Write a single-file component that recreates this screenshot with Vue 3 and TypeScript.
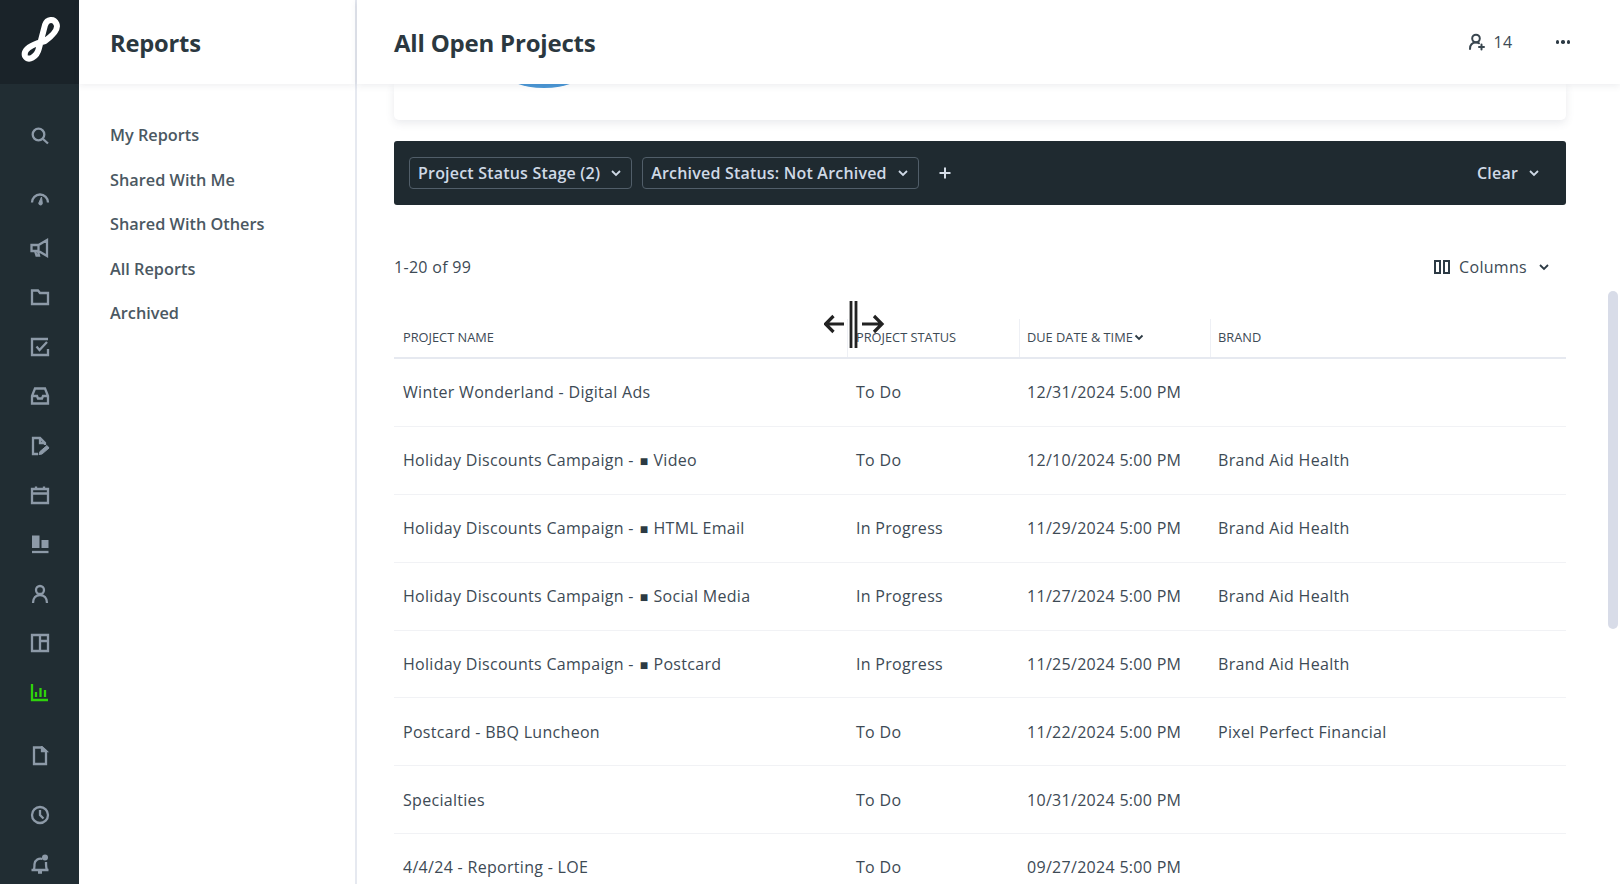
<script setup lang="ts">
interface Row { name: string; tag?: string; status: string; due: string; brand: string; }
const H = 'Holiday Discounts Campaign -';
const rows: Row[] = [
  { name: 'Winter Wonderland - Digital Ads', status: 'To Do', due: '12/31/2024 5:00 PM', brand: '' },
  { name: H, tag: 'Video', status: 'To Do', due: '12/10/2024 5:00 PM', brand: 'Brand Aid Health' },
  { name: H, tag: 'HTML Email', status: 'In Progress', due: '11/29/2024 5:00 PM', brand: 'Brand Aid Health' },
  { name: H, tag: 'Social Media', status: 'In Progress', due: '11/27/2024 5:00 PM', brand: 'Brand Aid Health' },
  { name: H, tag: 'Postcard', status: 'In Progress', due: '11/25/2024 5:00 PM', brand: 'Brand Aid Health' },
  { name: 'Postcard - BBQ Luncheon', status: 'To Do', due: '11/22/2024 5:00 PM', brand: 'Pixel Perfect Financial' },
  { name: 'Specialties', status: 'To Do', due: '10/31/2024 5:00 PM', brand: '' },
  { name: '4/4/24 - Reporting - LOE', status: 'To Do', due: '09/27/2024 5:00 PM', brand: '' },
];
const links = ['My Reports', 'Shared With Me', 'Shared With Others', 'All Reports', 'Archived'];
</script>

<template>
  <div class="app">
    <aside class="rail">
      <div class="logo">
        <svg width="44" height="54" viewBox="-2 -1 44 54" fill="none" stroke="#fff" stroke-width="6" stroke-linecap="round">
          <path d="M25 25 C32 20 39 14 36.500 8 C34 2 27 3 25 9 L19 32 C17 41 8 46 5 40 C3 34 10 30 18 27 L25 25" />
        </svg>
      </div>
      <nav class="rail-icons">
        <svg class="ic s1" viewBox="0 0 20 20"><circle cx="8.500" cy="8.500" r="5.800"/><path d="M13 13l5 4.500"/></svg>
        <svg class="ic s2" viewBox="0 0 20 20"><path d="M2 14.500a8 8 0 0 1 16 0"/><path d="M8.800 15l2.700-6 .8 6.500a1.700 1.700 0 0 1-3.500-.5z" fill="#8d9aa8" stroke-width="1"/></svg>
        <svg class="ic s3" viewBox="0 0 20 20"><path d="M1.500 7h7l8.500-5v16l-8.500-5h-7zM5 13l1.500 4.500h2.500l-1-4M8.500 7v6"/></svg>
        <svg class="ic s3" viewBox="0 0 20 20"><path d="M2 3.500h6l2 2.500h8v11H2z"/></svg>
        <svg class="ic s3" viewBox="0 0 20 20"><path d="M18 2H2v16h16v-6"/><path d="M6.500 9.500l3 3.500L17 5"/></svg>
        <svg class="ic s3" viewBox="0 0 20 20"><path d="M5 2.500h10L18 10v7.500H2V10zM2 10h5l1 2.500h4l1-2.500h5"/></svg>
        <svg class="ic s3" viewBox="0 0 20 20"><path d="M8 18H3V2h7l5 5v2M10 2v5h5"/><path d="M9 18.500l1-3 7-6 2 2.500-7 6z" fill="#8d9aa8" stroke-width="1"/></svg>
        <svg class="ic s3" viewBox="0 0 20 20"><path d="M2 4h16v14H2zM2 8.500h16M6 1.500V5M14 1.500V5"/></svg>
        <svg class="ic s3" viewBox="0 0 20 20"><path d="M2 1.500h7.500v12.500H2zM11.500 6h7v8h-7z" fill="#8d9aa8" stroke="none"/><path d="M2 18h16.500"/></svg>
        <svg class="ic s3" viewBox="0 0 20 20"><circle cx="10" cy="6" r="4"/><path d="M3 19c0-5 3-8 7-8s7 3 7 8"/></svg>
        <svg class="ic s3" viewBox="0 0 20 20"><path d="M2 2h16v16H2zM10 2v16M10 8h8"/></svg>
        <svg class="ic s3 active" viewBox="0 0 20 20"><path d="M2 1v16h16M6 9v5M10.500 5v9M15 7v7"/></svg>
        <svg class="ic s4" viewBox="0 0 20 20"><path d="M4 1.500h8l4 3.500v13H4z"/><path d="M12 1.500V5h4z" fill="#8d9aa8"/></svg>
        <svg class="ic s5" viewBox="0 0 20 20"><circle cx="10" cy="10" r="8"/><path d="M10 5v5l3.500 3.500"/></svg>
        <svg class="ic s6" viewBox="0 0 20 20"><path d="M1.500 16h17M3.500 16c1-1 1-3 1-6a6 6 0 0 1 8-5M16 8c0 3 0 6 1 8M8 18.500h4"/><circle cx="15" cy="3.500" r="3" fill="#8d9aa8" stroke="none"/></svg>
      </nav>
    </aside>

    <aside class="side">
      <div class="side-head">Reports</div>
      <ul class="side-links">
        <li v-for="l in links" :key="l">{{ l }}</li>
      </ul>
    </aside>

    <main class="main">
      <header class="top">
        <h1>All Open Projects</h1>
        <div class="top-right">
          <svg class="user" width="18" height="18" viewBox="0 0 18 18" fill="none" stroke="#39464f" stroke-width="2" stroke-linecap="round"><circle cx="8" cy="5.500" r="3.800"/><path d="M2 16c0-4 2-6.500 6-6.500 1.500 0 2.500.3 3 .8M13.500 11.500v5M11 14h5"/></svg>
          <span class="count14">14</span>
          <span class="dots"><i></i><i></i><i></i></span>
        </div>
      </header>

      <div class="body">
        <div class="content">
          <div class="card"><div class="arc"></div></div>

          <div class="filters">
            <button class="chip">Project Status Stage (2)<svg class="chev" viewBox="0 0 12 12"><path d="M2 4l4 4 4-4"/></svg></button>
            <button class="chip">Archived Status: Not Archived<svg class="chev" viewBox="0 0 12 12"><path d="M2 4l4 4 4-4"/></svg></button>
            <svg class="plus" viewBox="0 0 12 12"><path d="M6 0.500v11M0.500 6h11"/></svg>
            <div class="clear">Clear<svg class="chev" viewBox="0 0 12 12"><path d="M2 4l4 4 4-4"/></svg></div>
          </div>

          <div class="tools">
            <span>1-20 of 99</span>
            <div class="columns">
              <svg class="col-ic" width="16" height="14" viewBox="0 0 16 14" fill="none" stroke="#2c3a44" stroke-width="2"><path d="M1 1h5v12H1zM10 1h5v12h-5z"/></svg>
              <span>Columns</span>
              <svg class="chev dark" viewBox="0 0 12 12"><path d="M2 4l4 4 4-4"/></svg>
            </div>
          </div>

          <div class="table">
            <div class="tr th">
              <div class="c1">PROJECT NAME</div>
              <div class="c2">PROJECT STATUS</div>
              <div class="c3">DUE DATE &amp; TIME<svg class="sort" viewBox="0 0 10 10"><path d="M1.500 3.500L5 7l3.500-3.500"/></svg></div>
              <div class="c4">BRAND</div>
            </div>
            <div class="tr td" v-for="r in rows" :key="r.due">
              <div class="c1">{{ r.name }}<template v-if="r.tag"><span class="bullet">■</span>{{ r.tag }}</template></div>
              <div class="c2">{{ r.status }}</div>
              <div class="c3">{{ r.due }}</div>
              <div class="c4">{{ r.brand }}</div>
            </div>
          </div>
        </div>
        <div class="scrollbar"><div class="thumb"></div></div>
      </div>

      <svg class="cursor" width="62" height="50" viewBox="0 0 62 50" fill="none" stroke="#222" stroke-width="3.200">
        <path d="M1.500 24H20M9.500 16l-8 8 8 8M38 24h20M50 16l8 8-8 8"/>
        <path d="M27 1v47M32 1v47" stroke-width="2.800"/>
      </svg>
    </main>
  </div>
</template>

<style>
html, body { margin: 0; background: #fff; overflow: hidden; }
</style>

<style scoped>
.app {
  display: flex;
  width: 1620px;
  height: 884px;
  overflow: hidden;
  font-family: "Open Sans", "Noto Sans", sans-serif;
  color: #3d4a55;
  font-size: 16px;
  letter-spacing: .3px;
}
.rail {
  width: 79px;
  flex: none;
  background: #212d33;
  display: flex;
  flex-direction: column;
}
.logo {
  height: 84px;
  background: #1a2329;
  display: flex;
  align-items: center;
  justify-content: center;
}
.rail-icons { display: flex; flex-direction: column; align-items: center; padding-top: 42px; }
.ic {
  width: 20px;
  height: 20px;
  fill: none;
  stroke: #8d9aa8;
  stroke-width: 2.300;
  margin-bottom: 29.400px;
  flex: none;
}
.s1 { margin-bottom: 42px; }
.s2 { margin-bottom: 30px; }
.active { stroke: #2fd30c; margin-bottom: 43px; }
.s4 { margin-bottom: 39px; }
.s5 { margin-bottom: 29px; }
.s6 { margin-bottom: 0; }

.side {
  width: 276px;
  flex: none;
  border-right: 2px solid #e6e9f0;
  background: #fff;
}
.side-head {
  height: 84px;
  box-sizing: border-box;
  display: flex;
  align-items: center;
  padding: 1px 0 0 31px;
  font-size: 23.700px;
  font-weight: 700;
  letter-spacing: -.2px;
  color: #2b3840;
  box-shadow: 0 2px 6px rgba(60, 70, 90, .08);
}
.side-links { list-style: none; margin: 29px 0 0; padding: 0 0 0 31px; }
.side-links li {
  height: 44.500px;
  line-height: 44.500px;
  font-size: 16.300px;
  font-weight: 600;
  letter-spacing: 0;
  color: #4b5862;
}

.main { flex: 1; min-width: 0; position: relative; display: flex; flex-direction: column; }
.top {
  height: 84px;
  flex: none;
  position: relative;
  z-index: 2;
  background: #fff;
  box-shadow: 0 2px 7px rgba(60, 70, 90, .09);
  display: flex;
  align-items: center;
  justify-content: space-between;
  padding: 0 50px 0 37px;
}
.top h1 { margin: 0; font-size: 24px; font-weight: 700; letter-spacing: -.2px; color: #2b3840; }
.top-right { display: flex; align-items: center; }
.count14 { margin-left: 8px; font-size: 16px; color: #3d4a55; }
.dots { display: flex; gap: 2px; margin-left: 43px; }
.dots i { width: 3.500px; height: 3.500px; border-radius: 50%; background: #2c3a44; }

.body { flex: 1; display: flex; min-height: 0; position: relative; }
.content { flex: 1; padding: 0 54px 0 37px; min-width: 0; overflow: hidden; }
.card {
  height: 36px;
  background: #fff;
  border-radius: 0 0 5px 5px;
  box-shadow: 0 3px 8px rgba(70, 80, 110, .12);
  position: relative;
  overflow: hidden;
}
.arc {
  position: absolute;
  left: 110px;
  top: -30px;
  width: 80px;
  height: 34px;
  border-radius: 50%;
  background: #4a97d6;
}
.filters {
  margin-top: 21px;
  height: 64px;
  box-sizing: border-box;
  background: #1f2a30;
  border-radius: 3px;
  display: flex;
  align-items: center;
  padding: 0 26px 0 15px;
  gap: 10px;
}
.chip {
  height: 32px;
  box-sizing: border-box;
  display: flex;
  align-items: center;
  background: transparent;
  border: 1px solid #515e69;
  border-radius: 4px;
  color: #cfd9e6;
  font: 600 16px "Open Sans", "Noto Sans", sans-serif;
  letter-spacing: .2px;
  padding: 0 9px 0 8px;
}
.chev { width: 12px; height: 12px; margin-left: 10px; fill: none; stroke: #cfd9e6; stroke-width: 1.800; flex: none; }
.chev.dark { stroke: #2c3a44; margin-left: 11px; }
.plus { width: 12px; height: 12px; margin-left: 10px; fill: none; stroke: #d6dee8; stroke-width: 2; }
.clear { margin-left: auto; display: flex; align-items: center; color: #cfd9e6; font-weight: 600; font-size: 16px; letter-spacing: .2px; }

.tools {
  display: flex;
  align-items: center;
  justify-content: space-between;
  height: 22px;
  margin-top: 51px;
  padding-right: 16px;
}
.columns { display: flex; align-items: center; gap: 8px; font-weight: 500; }
.col-ic { margin-right: 1px; }
.columns .chev { margin-left: 3px; }

.table { margin-top: 33px; }
.tr { display: grid; grid-template-columns: 454px 172px 191px 1fr; }
.th {
  height: 46px;
  border-bottom: 2px solid #e6e9f0;
  box-sizing: content-box;
  font-size: 12.800px;
  letter-spacing: 0;
  align-items: end;
  color: #3d4a55;
}
.th > div { height: 38px; display: flex; align-items: center; padding-bottom: 2px; box-sizing: border-box; border-right: 1px solid #eef0f5; }
.th > div:last-child { border-right: 0; }
.sort { width: 10px; height: 10px; fill: none; stroke: #2c3a44; stroke-width: 1.800; margin-left: 1px; }
.td { height: 67.900px; align-items: center; border-bottom: 1px solid #f1f2f5; box-sizing: border-box; padding-bottom: .5px; }
.bullet { font-size: 14px; margin: 0 5px 0 6px; color: #2c3a44; }
.c1 { padding-left: 9px; }
.c2 { padding-left: 8px; }
.c3 { padding-left: 7px; }
.c4 { padding-left: 7px; }

.scrollbar { width: 14px; flex: none; position: absolute; right: 0; top: 0; bottom: 0; }
.thumb {
  position: absolute;
  left: 2px;
  top: 207px;
  width: 10px;
  height: 338px;
  background: #d8dce8;
  border-radius: 5px;
}
.cursor { position: absolute; left: 467px; top: 300px; z-index: 3; }
</style>
